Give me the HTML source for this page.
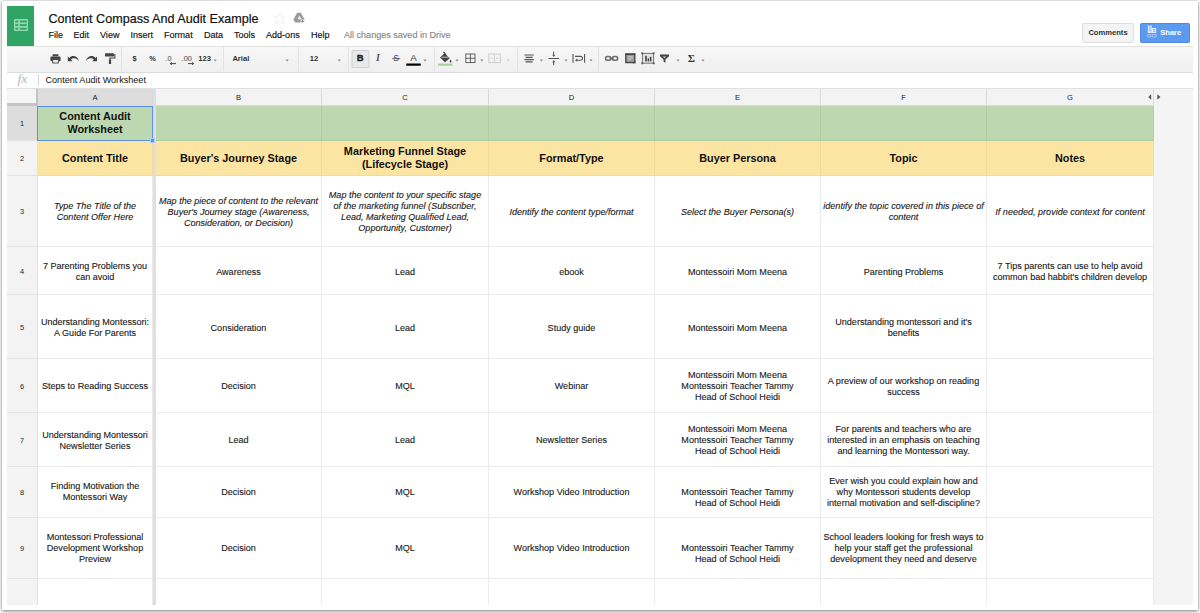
<!DOCTYPE html>
<html lang="en">
<head>
<meta charset="utf-8">
<title>Content Compass And Audit Example</title>
<style>
*{box-sizing:border-box;margin:0;padding:0}
html,body{width:1200px;height:613px;overflow:hidden;background:#fff}
body{font-family:"Liberation Sans",Arial,sans-serif;color:#222;position:relative}
.abs{position:absolute}
#win{position:absolute;left:2px;top:1px;width:1196px;height:609px;background:#fff;
  box-shadow:0 0 2px rgba(0,0,0,.32),0 2px 4px rgba(0,0,0,.35)}
#logo{position:absolute;left:7px;top:5.5px;width:27px;height:41px;background:#2fa464}
#title{position:absolute;left:48.5px;top:10.5px;font-size:12.6px;line-height:16px;color:#111;white-space:nowrap;-webkit-text-stroke:0.2px #111}
.menu{position:absolute;top:28.7px;font-size:9.05px;line-height:12px;color:#111;white-space:nowrap;-webkit-text-stroke:0.15px}
#saved{color:#888}
#toolbar{position:absolute;left:7px;top:46px;width:1186px;height:27px;
  background:linear-gradient(#f7f7f7,#efefef);border-top:1px solid #e3e3e3;border-bottom:1px solid #dcdcdc}
#fbar{position:absolute;left:7px;top:73px;width:1186px;height:15px;background:#fff}
#fx{position:absolute;left:17.5px;top:70.6px;font-family:"Liberation Serif",serif;font-style:italic;font-size:13.5px;line-height:16px;color:#b8b8b8}
#fsep{position:absolute;left:38px;top:74px;width:1px;height:12px;background:#d8d8d8}
#ftext{position:absolute;left:45.5px;top:73.8px;font-size:9.1px;line-height:12px;color:#111;white-space:nowrap}
#grid{position:absolute;left:7px;top:88px;width:1186px;height:517px;background:#f4f4f4;overflow:hidden}
.c{position:absolute;display:flex;align-items:center;justify-content:center;text-align:center;
  font-size:9.05px;line-height:11px;color:#1a1a1a;background:#fff;padding-top:2px;
  border-right:1px solid #ebebeb;border-bottom:1px solid #ebebeb;overflow:hidden;-webkit-text-stroke:0.12px #1a1a1a}
.c span{display:block;white-space:nowrap}
.g{background:#bdd8b0;border-color:#b1cda4;padding-top:0}
.y{-webkit-text-stroke:0;background:#fce5a2;border-color:#f2dc9a;padding-top:0;font-weight:bold;font-size:10.85px;line-height:13.3px;color:#111}
.gb{-webkit-text-stroke:0;font-weight:bold;font-size:10.85px;line-height:13.3px;color:#111}
.i{font-style:italic}
.ch{position:absolute;top:0;height:18px;border-top:1px solid #e0e0e0;background:#f3f3f3;border-right:1px solid #dadada;border-bottom:1px solid #dcdcdc;
  font-size:7.6px;line-height:17px;text-align:center;color:#222}
.rh{position:absolute;left:0;width:31px;background:#f3f3f3;border-right:1px solid #e2e2e2;border-bottom:1px solid #e2e2e2;
  font-size:7.4px;color:#222;display:flex;align-items:center;justify-content:center;padding-top:1px}
.sel{background:#dddddd}
#btnc{left:1082px;top:23px;width:52px;height:19.5px;background:#f4f4f4;border:1px solid #dedede;border-radius:1.5px;
  font-size:7.6px;font-weight:bold;color:#333;text-align:center;line-height:18px}
#btns{left:1140px;top:23px;width:50px;height:19.5px;background:#5c9af2;border:1px solid #4f8ae0;border-radius:1.5px;
  font-size:7.6px;font-weight:bold;color:#fff;line-height:18px}
#btns span{position:absolute;left:19.2px;top:0}
#bar{background:#dcdfe4}
#corner{border-right:2px solid #c4c4c4;border-bottom:3px solid #c4c4c4;background:#f5f5f5}
#selbox{border:1px solid #5a92ea;pointer-events:none}
#handle{width:5px;height:5px;background:#5b93ea;border:0.5px solid rgba(255,255,255,.5)}
</style>
</head>
<body>
<div id="win"></div>
<div id="logo">
<svg class="abs" style="left:6.6px;top:13.8px" width="14.2" height="12.2" viewBox="0 0 14.2 12.2"><rect x="0" y="0" width="14.2" height="12.2" rx="0.8" fill="#93d7b0"/><g fill="#2fa464"><rect x="1.4" y="1.6" width="2.8" height="1.8"/><rect x="5.8" y="1.6" width="7" height="1.8"/><rect x="1.4" y="5.2" width="2.8" height="1.8"/><rect x="5.8" y="5.2" width="7" height="1.8"/><rect x="1.4" y="8.8" width="2.8" height="1.8"/><rect x="5.8" y="8.8" width="7" height="1.8"/></g></svg>
</div>
<div id="title">Content Compass And Audit Example</div>
<div class="menu" style="left:48.5px">File</div>
<div class="menu" style="left:73.5px">Edit</div>
<div class="menu" style="left:100px">View</div>
<div class="menu" style="left:130.5px">Insert</div>
<div class="menu" style="left:164px">Format</div>
<div class="menu" style="left:204px">Data</div>
<div class="menu" style="left:234px">Tools</div>
<div class="menu" style="left:266px">Add-ons</div>
<div class="menu" style="left:311px">Help</div>
<div class="menu" id="saved" style="left:344px">All changes saved in Drive</div>

<svg class="abs" style="left:272px;top:11px" width="36" height="14" viewBox="272 11 36 14">
<path d="M279.5 13.2L281.1 16.8L285 17.2L282.1 19.8L282.9 23.6L279.5 21.6L276.1 23.6L276.9 19.8L274 17.2L277.9 16.8Z" fill="none" stroke="#ececec" stroke-width="0.9"/>
<path d="M297.2 12.8H300.8L304.6 19.4L302.8 22.6H295.2L293.4 19.4Z" fill="#9a9a9a"/>
<path d="M297.6 19.2H301.4L299.5 15.8Z" fill="#fff"/>
<path d="M302.6 19.4V23.2M300.7 21.3H304.5" stroke="#fff" stroke-width="2.2"/>
<path d="M302.6 19.8V22.8M301.1 21.3H304.1" stroke="#8a8a8a" stroke-width="1"/>
</svg>
<div class="abs" id="btnc">Comments</div>
<div class="abs" id="btns"><svg class="abs" style="left:5.5px;top:1px" width="10" height="13" viewBox="0 0 10 13"><rect x="0.8" y="0.6" width="4" height="7.4" fill="#dfeafc"/><rect x="5" y="3" width="4.2" height="5" fill="#dfeafc"/><path d="M1.8 2H3.8M1.8 3.8H3.8M1.8 5.6H3.8M6 4.6H8.2M6 6.2H8.2" stroke="#5c9af2" stroke-width="0.7"/><path d="M0.6 9.6H4V12H0.6ZM5.4 9.6H9.2V12H5.4Z" fill="none" stroke="#cfe0fb" stroke-width="0.6"/></svg><span>Share</span></div>
<div id="toolbar"></div>
<!-- TB -->
<svg class="abs" id="tb" style="left:0;top:44px" width="1200" height="32" viewBox="0 44 1200 32" font-family="Liberation Sans, Arial, sans-serif">
<g fill="none" stroke="#e2e2e2" stroke-width="1">
<path d="M121.5 47V71M223.5 47V71M298.5 47V71M348.5 47V71M434.5 47V71M517.5 47V71M598.5 47V71"/>
</g>
<!-- print -->
<g fill="#444">
<rect x="52.6" y="54.3" width="5.8" height="2"/>
<rect x="50.4" y="56.6" width="10.2" height="4.6" rx="1.2"/>
<rect x="52.7" y="59.6" width="5.6" height="3.4" fill="#f1f1f1" stroke="#444" stroke-width="0.9"/>
</g>
<!-- undo -->
<path d="M67.8 56.6V61.2H72.6L70.9 59.6C73 57.6 76.4 57.6 79 60.9C77.2 55.4 72 54.8 69.3 58Z" fill="#444"/>
<!-- redo -->
<path d="M97 56.6V61.2H92.2L93.9 59.6C91.8 57.6 88.4 57.6 85.8 60.9C87.6 55.4 92.8 54.8 95.5 58Z" fill="#444"/>
<!-- paint format -->
<g fill="#444">
<rect x="105" y="53.2" width="9" height="3.2" rx="0.6"/>
<path d="M114 54.3H115.4V58.4H110.6V59.6H109.4V57.4H114.4V55.2H114Z"/>
<rect x="108.9" y="59.4" width="2.2" height="4.6"/>
</g>
<g fill="#333" font-size="7.4" font-weight="bold">
<text x="132.6" y="60.8">$</text>
<text x="149.2" y="60.8">%</text>
<text x="165.4" y="60.6" font-size="7.4" font-weight="normal" fill="#444">.0</text>
<text x="181.6" y="60.6" font-size="7.4" font-weight="normal" fill="#444">.00</text>
<text x="198.2" y="60.8" font-size="7.6">123</text>
<text x="232.4" y="60.8" font-size="7.6">Arial</text>
<text x="309.8" y="60.8" font-size="7.6">12</text>
</g>
<!-- dec arrows -->
<path d="M170.4 63.6H176M170.4 63.6L172 62.4M170.4 63.6L172 64.8" stroke="#333" stroke-width="0.9" fill="none"/>
<path d="M188 63.6H193.6M193.6 63.6L192 62.4M193.6 63.6L192 64.8" stroke="#333" stroke-width="0.9" fill="none"/>
<!-- dropdown arrows -->
<g fill="#888">
<path d="M213.6 59.6h3.2l-1.6 1.8z"/>
<path d="M285.6 59.6h3.2l-1.6 1.8z"/>
<path d="M337.6 59.6h3.2l-1.6 1.8z"/>
<path d="M423.4 59.6h3.2l-1.6 1.8z"/>
<path d="M455.4 59.6h3.2l-1.6 1.8z"/>
<path d="M480.2 59.6h3.2l-1.6 1.8z"/>
<path d="M506.8 59.6h3.2l-1.6 1.8z" fill="#ccc"/>
<path d="M539.8 59.6h3.2l-1.6 1.8z"/>
<path d="M564.4 59.6h3.2l-1.6 1.8z"/>
<path d="M589.4 59.6h3.2l-1.6 1.8z"/>
<path d="M676.4 59.6h3.2l-1.6 1.8z"/>
<path d="M701.4 59.6h3.2l-1.6 1.8z"/>
</g>
<!-- bold button -->
<rect x="352" y="50.5" width="17" height="17" rx="1" fill="#e9e9e9" stroke="#d2d2d2" stroke-width="1"/>
<text x="360.3" y="61.4" font-size="9.6" font-weight="bold" text-anchor="middle" fill="#222" stroke="#222" stroke-width="0.3">B</text>
<text x="377.8" y="61.4" font-size="9.8" font-style="italic" font-weight="bold" text-anchor="middle" fill="#555" font-family="Liberation Serif, serif">I</text>
<text x="396.2" y="61.4" font-size="8.6" text-anchor="middle" fill="#444">S</text>
<path d="M392.2 58.6H400.2" stroke="#444" stroke-width="0.8"/>
<text x="413.4" y="61.3" font-size="9.8" text-anchor="middle" fill="#444">A</text>
<rect x="406.3" y="63.5" width="14.4" height="2.2" fill="#000"/>
<!-- fill bucket -->
<g fill="#444">
<path d="M440 57.6L444.6 53.2L449.8 58.2L445 62.2Z"/>
<path d="M443 52.2L444 51.6L446.4 54.6L445.6 55.2Z"/>
<path d="M450.6 59.4C451.2 60.4 451.6 61 451.6 61.5A1 1 0 0 1 449.6 61.5C449.6 61 450 60.4 450.6 59.4Z"/>
</g>
<path d="M441.4 57.2H448.6" stroke="#f3f3f3" stroke-width="0.7"/>
<rect x="438" y="63.6" width="14.4" height="2.1" fill="#a9cf9a"/>
<!-- borders -->
<g stroke="#555" stroke-width="0.9" fill="none">
<rect x="465.8" y="54" width="9.2" height="8.6"/>
<path d="M470.4 54V62.6M465.8 58.3H475"/>
</g>
<!-- merge (disabled) -->
<g stroke="#d0d0d0" stroke-width="1" fill="none">
<rect x="488.8" y="54" width="11.6" height="8.6"/>
<path d="M494.6 54V62.6M490.6 58.3H493.2M496 58.3H498.6"/>
</g>
<!-- h-align -->
<path d="M524.4 55H533.8M525.6 57.3H532.6M524.4 59.6H533.8M525.6 61.9H532.6" stroke="#555" stroke-width="1.2"/>
<!-- v-align -->
<g stroke="#555" stroke-width="1" fill="#555">
<path d="M548.4 58.5H559" fill="none"/>
<path d="M553.7 51.6V56" fill="none"/>
<path d="M552.2 54.8H555.2L553.7 57Z" stroke="none"/>
<path d="M553.7 65.2V61" fill="none"/>
<path d="M552.2 62.2H555.2L553.7 60Z" stroke="none"/>
</g>
<!-- wrap -->
<g stroke="#555" stroke-width="1.1" fill="none">
<path d="M573 54V62.8M584.6 54V62.8"/>
<path d="M575 56.4H580.6A1.7 1.7 0 0 1 580.6 60.2H577"/>
</g>
<path d="M575 60.2L577.4 58.6V61.8Z" fill="#555"/>
<!-- link -->
<g stroke="#6a6a6a" stroke-width="1.6" fill="none">
<rect x="605.6" y="56.5" width="5.2" height="3.8" rx="1.7"/>
<rect x="612.4" y="56.5" width="5.2" height="3.8" rx="1.7"/>
<path d="M609.6 58.4H613.6"/>
</g>
<!-- comment -->
<rect x="625.8" y="54.2" width="9" height="8.4" fill="#9a9a9a" stroke="#444" stroke-width="1.3"/>
<rect x="625.2" y="53.4" width="10.2" height="1.6" fill="#444"/>
<path d="M627.6 56.6H633M627.6 58.2H633M627.6 59.8H631.2" stroke="#d8d8d8" stroke-width="0.7"/>
<path d="M635.4 60.4V63.2H632.4Z" fill="#444"/>
<!-- chart -->
<g>
<rect x="642.4" y="53.4" width="11.2" height="9.8" fill="#e4e4e4" stroke="#777" stroke-width="1"/>
<rect x="645.2" y="55.8" width="1.6" height="5.6" fill="#444"/>
<rect x="647.6" y="58.4" width="1.4" height="3" fill="#444"/>
<rect x="649.8" y="56.8" width="1.6" height="4.6" fill="#444"/>
<g fill="#555"><rect x="641.4" y="52.4" width="1.8" height="1.8"/><rect x="652.8" y="52.4" width="1.8" height="1.8"/><rect x="641.4" y="62.4" width="1.8" height="1.8"/><rect x="652.8" y="62.4" width="1.8" height="1.8"/></g>
</g>
<!-- filter -->
<path d="M660 54.6H669V56.2L665.4 59.6V62.8L663.6 61.8V59.6L660 56.2Z" fill="#444"/>
<path d="M662.6 56.4H666.4L664.5 58.2Z" fill="#cfcfcf"/>
<!-- sigma -->
<text x="691.3" y="62.4" font-size="11" font-weight="bold" text-anchor="middle" fill="#333" font-family="Liberation Serif, serif">Σ</text>
</svg>
<!-- /TB -->
<div id="fbar"></div>
<div id="fx">fx</div>
<div id="fsep"></div>
<div id="ftext">Content Audit Worksheet</div>

<div id="grid">
<!-- GRID -->
<div class="ch" id="corner" style="left:0;width:31px"></div>
<div class="ch sel" style="left:31px;width:115px">A</div>
<div class="ch" style="left:149px;width:166px">B</div>
<div class="ch" style="left:315px;width:167px">C</div>
<div class="ch" style="left:482px;width:166px">D</div>
<div class="ch" style="left:648px;width:166px">E</div>
<div class="ch" style="left:814px;width:166px">F</div>
<div class="ch" style="left:980px;width:167px">G</div>
<div class="rh sel" style="top:18px;height:35px">1</div>
<div class="rh" style="top:53px;height:35px">2</div>
<div class="rh" style="top:88px;height:71px">3</div>
<div class="rh" style="top:159px;height:48px">4</div>
<div class="rh" style="top:207px;height:64px">5</div>
<div class="rh" style="top:271px;height:54px">6</div>
<div class="rh" style="top:325px;height:54px">7</div>
<div class="rh" style="top:379px;height:51px">8</div>
<div class="rh" style="top:430px;height:61px">9</div>
<div class="rh" style="top:491px;height:29px"></div>
<div class="c g gb" style="left:31px;top:18px;width:115px;height:35px;"><span>Content Audit<br>Worksheet</span></div>
<div class="c g" style="left:149px;top:18px;width:166px;height:35px;"></div>
<div class="c g" style="left:315px;top:18px;width:167px;height:35px;"></div>
<div class="c g" style="left:482px;top:18px;width:166px;height:35px;"></div>
<div class="c g" style="left:648px;top:18px;width:166px;height:35px;"></div>
<div class="c g" style="left:814px;top:18px;width:166px;height:35px;"></div>
<div class="c g" style="left:980px;top:18px;width:167px;height:35px;"></div>
<div class="c y" style="left:31px;top:53px;width:115px;height:35px;padding-top:2px;"><span>Content Title</span></div>
<div class="c y" style="left:149px;top:53px;width:166px;height:35px;padding-top:2px;"><span>Buyer's Journey Stage</span></div>
<div class="c y" style="left:315px;top:53px;width:167px;height:35px;"><span>Marketing Funnel Stage<br>(Lifecycle Stage)</span></div>
<div class="c y" style="left:482px;top:53px;width:166px;height:35px;padding-top:2px;"><span>Format/Type</span></div>
<div class="c y" style="left:648px;top:53px;width:166px;height:35px;padding-top:2px;"><span>Buyer Persona</span></div>
<div class="c y" style="left:814px;top:53px;width:166px;height:35px;padding-top:2px;"><span>Topic</span></div>
<div class="c y" style="left:980px;top:53px;width:167px;height:35px;padding-top:2px;"><span>Notes</span></div>
<div class="c i" style="left:31px;top:88px;width:115px;height:71px;padding-top:2px;"><span>Type The Title of the<br>Content Offer Here</span></div>
<div class="c i" style="left:149px;top:88px;width:166px;height:71px;padding-top:2px;"><span>Map the piece of content to the relevant<br>Buyer's Journey stage (Awareness,<br>Consideration, or Decision)</span></div>
<div class="c i" style="left:315px;top:88px;width:167px;height:71px;padding-top:2px;"><span>Map the content to your specific stage<br>of the marketing funnel (Subscriber,<br>Lead, Marketing Qualified Lead,<br>Opportunity, Customer)</span></div>
<div class="c i" style="left:482px;top:88px;width:166px;height:71px;padding-top:2px;"><span>Identify the content type/format</span></div>
<div class="c i" style="left:648px;top:88px;width:166px;height:71px;padding-top:2px;"><span>Select the Buyer Persona(s)</span></div>
<div class="c i" style="left:814px;top:88px;width:166px;height:71px;padding-top:2px;"><span>identify the topic covered in this piece of<br>content</span></div>
<div class="c i" style="left:980px;top:88px;width:167px;height:71px;padding-top:2px;"><span>If needed, provide context for content</span></div>
<div class="c" style="left:31px;top:159px;width:115px;height:48px;padding-top:3.5px;"><span>7 Parenting Problems you<br>can avoid</span></div>
<div class="c" style="left:149px;top:159px;width:166px;height:48px;padding-top:3.5px;"><span>Awareness</span></div>
<div class="c" style="left:315px;top:159px;width:167px;height:48px;padding-top:3.5px;"><span>Lead</span></div>
<div class="c" style="left:482px;top:159px;width:166px;height:48px;padding-top:3.5px;"><span>ebook</span></div>
<div class="c" style="left:648px;top:159px;width:166px;height:48px;padding-top:3.5px;"><span>Montessoiri Mom Meena</span></div>
<div class="c" style="left:814px;top:159px;width:166px;height:48px;padding-top:3.5px;"><span>Parenting Problems</span></div>
<div class="c" style="left:980px;top:159px;width:167px;height:48px;padding-top:3.5px;"><span>7 Tips parents can use to help avoid<br>common bad habbit's children develop</span></div>
<div class="c" style="left:31px;top:207px;width:115px;height:64px;padding-top:3px;"><span>Understanding Montessori:<br>A Guide For Parents</span></div>
<div class="c" style="left:149px;top:207px;width:166px;height:64px;padding-top:3px;"><span>Consideration</span></div>
<div class="c" style="left:315px;top:207px;width:167px;height:64px;padding-top:3px;"><span>Lead</span></div>
<div class="c" style="left:482px;top:207px;width:166px;height:64px;padding-top:3px;"><span>Study guide</span></div>
<div class="c" style="left:648px;top:207px;width:166px;height:64px;padding-top:3px;"><span>Montessoiri Mom Meena</span></div>
<div class="c" style="left:814px;top:207px;width:166px;height:64px;padding-top:3px;"><span>Understanding montessori and it's<br>benefits</span></div>
<div class="c" style="left:980px;top:207px;width:167px;height:64px;"></div>
<div class="c" style="left:31px;top:271px;width:115px;height:54px;"><span>Steps to Reading Success</span></div>
<div class="c" style="left:149px;top:271px;width:166px;height:54px;"><span>Decision</span></div>
<div class="c" style="left:315px;top:271px;width:167px;height:54px;"><span>MQL</span></div>
<div class="c" style="left:482px;top:271px;width:166px;height:54px;"><span>Webinar</span></div>
<div class="c" style="left:648px;top:271px;width:166px;height:54px;"><span>Montessoiri Mom Meena<br>Montessoiri Teacher Tammy<br>Head of School Heidi</span></div>
<div class="c" style="left:814px;top:271px;width:166px;height:54px;"><span>A preview of our workshop on reading<br>success</span></div>
<div class="c" style="left:980px;top:271px;width:167px;height:54px;"></div>
<div class="c" style="left:31px;top:325px;width:115px;height:54px;"><span>Understanding Montessori<br>Newsletter Series</span></div>
<div class="c" style="left:149px;top:325px;width:166px;height:54px;"><span>Lead</span></div>
<div class="c" style="left:315px;top:325px;width:167px;height:54px;"><span>Lead</span></div>
<div class="c" style="left:482px;top:325px;width:166px;height:54px;"><span>Newsletter Series</span></div>
<div class="c" style="left:648px;top:325px;width:166px;height:54px;"><span>Montessoiri Mom Meena<br>Montessoiri Teacher Tammy<br>Head of School Heidi</span></div>
<div class="c" style="left:814px;top:325px;width:166px;height:54px;"><span>For parents and teachers who are<br>interested in an emphasis on teaching<br>and learning the Montessori way.</span></div>
<div class="c" style="left:980px;top:325px;width:167px;height:54px;"></div>
<div class="c" style="left:31px;top:379px;width:115px;height:51px;padding-top:0;"><span>Finding Motivation the<br>Montessori Way</span></div>
<div class="c" style="left:149px;top:379px;width:166px;height:51px;padding-top:0;"><span>Decision</span></div>
<div class="c" style="left:315px;top:379px;width:167px;height:51px;padding-top:0;"><span>MQL</span></div>
<div class="c" style="left:482px;top:379px;width:166px;height:51px;padding-top:0;"><span>Workshop Video Introduction</span></div>
<div class="c" style="left:648px;top:379px;width:166px;height:51px;padding-top:0;"><span><br>Montessoiri Teacher Tammy<br>Head of School Heidi</span></div>
<div class="c" style="left:814px;top:379px;width:166px;height:51px;padding-top:0;"><span>Ever wish you could explain how and<br>why Montessori students develop<br>internal motivation and self-discipline?</span></div>
<div class="c" style="left:980px;top:379px;width:167px;height:51px;"></div>
<div class="c" style="left:31px;top:430px;width:115px;height:61px;padding-top:0;"><span>Montessori Professional<br>Development Workshop<br>Preview</span></div>
<div class="c" style="left:149px;top:430px;width:166px;height:61px;padding-top:0;"><span>Decision</span></div>
<div class="c" style="left:315px;top:430px;width:167px;height:61px;padding-top:0;"><span>MQL</span></div>
<div class="c" style="left:482px;top:430px;width:166px;height:61px;padding-top:0;"><span>Workshop Video Introduction</span></div>
<div class="c" style="left:648px;top:430px;width:166px;height:61px;padding-top:0;"><span><br>Montessoiri Teacher Tammy<br>Head of School Heidi</span></div>
<div class="c" style="left:814px;top:430px;width:166px;height:61px;padding-top:0;"><span>School leaders looking for fresh ways to<br>help your staff get the professional<br>development they need and deserve</span></div>
<div class="c" style="left:980px;top:430px;width:167px;height:61px;"></div>
<div class="c" style="left:31px;top:491px;width:115px;height:29px;"></div>
<div class="c" style="left:149px;top:491px;width:166px;height:29px;"></div>
<div class="c" style="left:315px;top:491px;width:167px;height:29px;"></div>
<div class="c" style="left:482px;top:491px;width:166px;height:29px;"></div>
<div class="c" style="left:648px;top:491px;width:166px;height:29px;"></div>
<div class="c" style="left:814px;top:491px;width:166px;height:29px;"></div>
<div class="c" style="left:980px;top:491px;width:167px;height:29px;"></div>
<div class="abs" id="bar" style="left:146px;top:0;width:3px;height:517px"></div>
<div class="abs" id="selbox" style="left:30px;top:18px;width:116px;height:35px"></div>
<div class="abs" id="handle" style="left:143px;top:50px"></div>
<div class="abs" style="left:0;top:0;width:1186px;height:1px;background:#e0e0e0"></div>
<svg class="abs" style="left:1138.8px;top:4px" width="16" height="10" viewBox="0 0 16 10"><path d="M5.2 2.2V7.8L2.2 5Z" fill="#555"/><path d="M11.4 2.2V7.8L14.4 5Z" fill="#555"/></svg>
<!-- /GRID -->
</div>
</body>
</html>
